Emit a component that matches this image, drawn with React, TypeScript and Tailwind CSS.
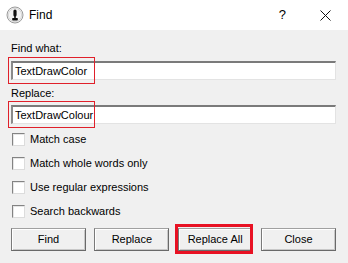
const font = "font-['Liberation_Sans',Arial,sans-serif]";

function TitleIcon() {
  return (
    <svg width="18" height="18" viewBox="0 0 18 18" aria-hidden="true">
      <circle cx="9" cy="9" r="8" fill="#f4f4f4" stroke="#9a9a9a" strokeWidth="1" />
      <circle cx="9" cy="9" r="6.6" fill="none" stroke="#d8d8d8" strokeWidth="1" />
      <rect x="7.4" y="3.5" width="3.2" height="7" rx="1.6" fill="#111" />
      <rect x="8.2" y="9" width="1.6" height="3" fill="#111" />
      <rect x="6.2" y="12" width="5.6" height="2.4" rx="0.6" fill="#111" />
    </svg>
  );
}

function TextBox({ value }: { value: string }) {
  return (
    <div className="relative">
      <div className="flex h-[19px] items-center border-t-2 border-l-2 border-r border-b border-t-[#7a7a7a] border-l-[#8a8a8a] border-r-[#e3e3e3] border-b-[#e3e3e3] bg-white pl-[2px] text-[11px] text-black">
        {value}
      </div>
      <div className="pointer-events-none absolute left-[-3px] top-[-4px] h-[27px] w-[87px] border border-[#e0202a]" />
    </div>
  );
}

function CheckRow({ label }: { label: string }) {
  return (
    <label className="flex h-[13px] items-center gap-[5px] text-[11px] text-black">
      <span className="h-[13px] w-[13px] border border-t-[#838383] border-l-[#838383] border-r-[#dcdcdc] border-b-[#dcdcdc] bg-white shadow-[inset_1px_1px_0_#e6e6e6]" />
      <span>{label}</span>
    </label>
  );
}

function Button({ label, highlight }: { label: string; highlight?: boolean }) {
  return (
    <div className="relative">
      <button
        type="button"
        className="flex h-[23px] w-[75px] items-center justify-center border border-t-[#a0a0a0] border-l-[#7a7a7a] border-r-[#696969] border-b-[#696969] bg-[#f0f0f0] text-[11px] text-black shadow-[inset_1px_1px_0_#ffffff,inset_-1px_-1px_0_#c8c8c8]"
      >
        {label}
      </button>
      {highlight && (
        <div className="pointer-events-none absolute left-[-3px] top-[-4px] h-[30px] w-[78px] border-[3px] border-[#e81123]" />
      )}
    </div>
  );
}

export default function App() {
  return (
    <div className={`h-[263px] w-[348px] overflow-hidden bg-[#f0f0f0] ${font}`}>
      <div className="flex h-[30px] items-center bg-white pl-[6px]">
        <TitleIcon />
        <span className="ml-[5px] text-[12px] text-black">Find</span>
        <span className="ml-auto mr-[34px] text-[13px] text-black">?</span>
        <svg width="11" height="11" viewBox="0 0 11 11" className="mr-[17px]" aria-hidden="true">
          <path d="M0.5 0.5 L10.5 10.5 M10.5 0.5 L0.5 10.5" stroke="#111" strokeWidth="1" />
        </svg>
      </div>

      <div className="pl-[11px] pr-[12px]">
        <div className="mt-[10px] h-[16px] text-[11px] leading-[16px] text-black">Find what:</div>
        <div className="mt-[5px]">
          <TextBox value="TextDrawColor" />
        </div>
        <div className="mt-[5px] h-[16px] text-[11px] leading-[16px] text-black">Replace:</div>
        <div className="mt-[4px]">
          <TextBox value="TextDrawColour" />
        </div>

        <div className="mt-[9px] flex flex-col gap-[11px] pl-[1px]">
          <CheckRow label="Match case" />
          <CheckRow label="Match whole words only" />
          <CheckRow label="Use regular expressions" />
          <CheckRow label="Search backwards" />
        </div>

        <div className="mt-[10px] flex justify-between">
          <Button label="Find" />
          <Button label="Replace" />
          <Button label="Replace All" highlight />
          <Button label="Close" />
        </div>
      </div>
    </div>
  );
}
